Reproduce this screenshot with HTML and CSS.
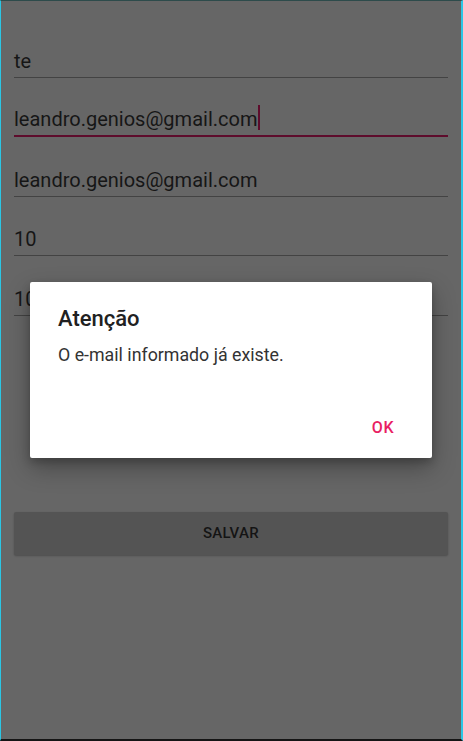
FILE: index.html
```html
<!DOCTYPE html>
<html>
<head>
<meta charset="utf-8">
<link rel="stylesheet" href="styles.css">
</head>
<body>
<div class="screen">
  <div class="form">
    <div class="field"><span class="value">te</span></div>
    <div class="field focused"><span class="value">leandro.genios@gmail.com<span class="cursor"></span></span></div>
    <div class="field"><span class="value">leandro.genios@gmail.com</span></div>
    <div class="field"><span class="value">10</span></div>
    <div class="field"><span class="value">10</span></div>
    <div class="button-wrap"><div class="button">SALVAR</div></div>
  </div>
  <div class="dialog">
    <div class="dialog-title">Atenção</div>
    <div class="dialog-message">O e-mail informado já existe.</div>
    <div class="dialog-actions"><span class="dialog-ok">OK</span></div>
  </div>
</div>
</body>
</html>
```
FILE: styles.css
```css
html, body {
  margin: 0;
  padding: 0;
  width: 463px;
  height: 741px;
  overflow: hidden;
  background: #666666;
}
.screen {
  position: relative;
  box-sizing: border-box;
  width: 463px;
  height: 741px;
  background: #666666;
  border-left: 1px solid #2bc6e4;
  border-right: 2px solid #2bc6e4;
  border-top: 1px solid #2d4b4b;
  border-bottom: 2px solid #151515;
  font-family: Roboto, "Noto Sans", sans-serif;
}
.form {
  padding: 17px 13px 0 13px;
}
.field {
  height: 59.6px;
  box-sizing: border-box;
  display: flex;
  align-items: flex-end;
  border-bottom: 1px solid #434343;
}
.field.focused {
  border-bottom: 2px solid #5e0c2c;
}
.value {
  position: relative;
  font-size: 20px;
  line-height: 24px;
  color: #161616;
  padding-bottom: 4px;
}
.cursor {
  display: inline-block;
  width: 2px;
  height: 25px;
  background: #5e0c2c;
  vertical-align: -4px;
  margin-left: 1px;
}
.button-wrap {
  padding-top: 196px;
}
.button {
  height: 43px;
  background: #545454;
  border-radius: 2px;
  box-shadow: 0 1px 2px rgba(0,0,0,0.25);
  display: flex;
  align-items: center;
  justify-content: center;
  font-size: 15px;
  font-weight: 500;
  color: #141414;
  letter-spacing: 0.3px;
}
.dialog {
  position: absolute;
  left: 29px;
  top: 281px;
  width: 402px;
  height: 176px;
  background: #ffffff;
  border-radius: 2px;
  box-shadow: 0 10px 24px rgba(0,0,0,0.3), 0 4px 8px rgba(0,0,0,0.2);
  box-sizing: border-box;
  padding: 23px 28px 0 28px;
}
.dialog-title {
  font-size: 22px;
  font-weight: 500;
  line-height: 28px;
  color: #212121;
}
.dialog-message {
  margin-top: 10px;
  font-size: 17.8px;
  line-height: 24px;
  color: #333333;
}
.dialog-actions {
  display: flex;
  justify-content: flex-end;
  margin-top: 51px;
  padding-right: 10px;
}
.dialog-ok {
  font-size: 16px;
  font-weight: 500;
  letter-spacing: 0.5px;
  color: #e91e63;
}
```
